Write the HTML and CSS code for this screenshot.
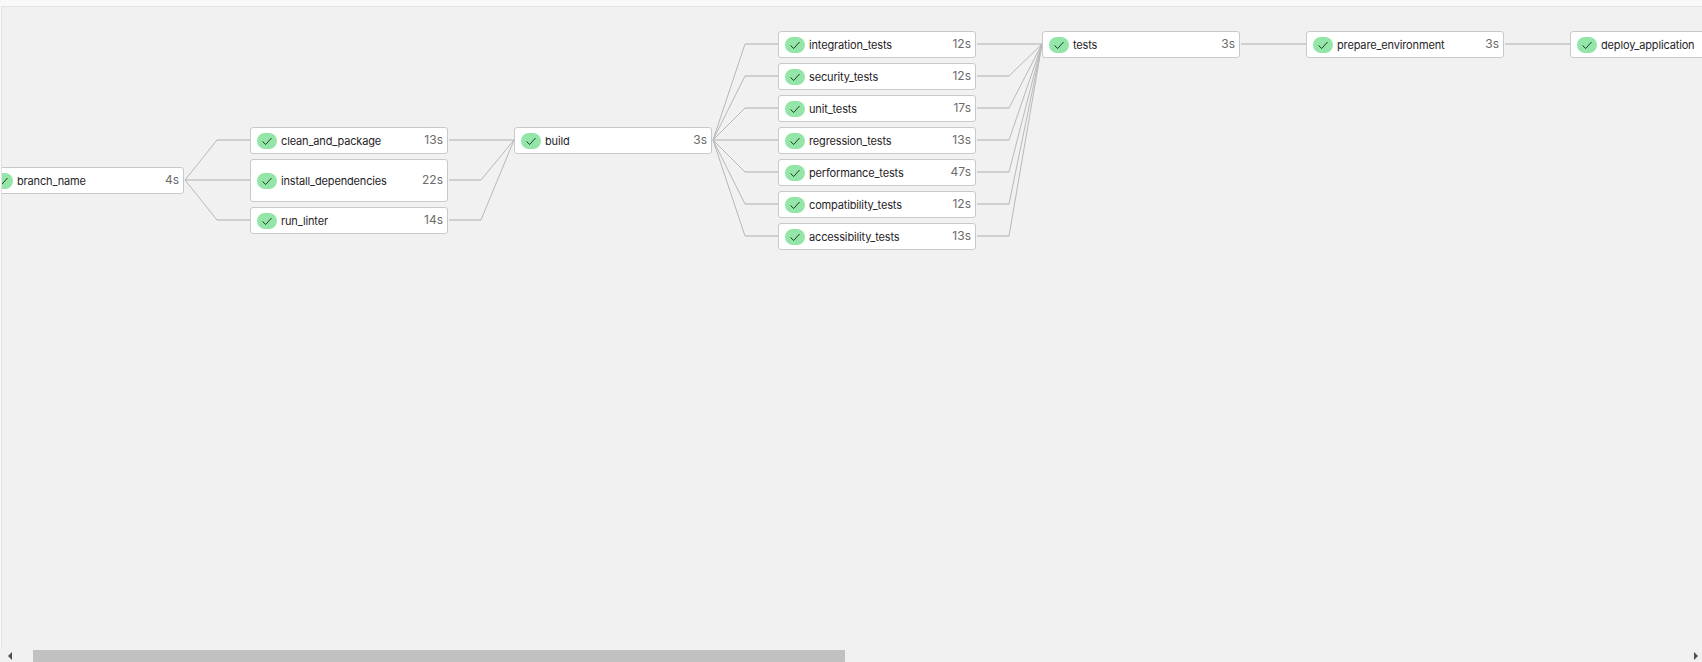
FILE: index.html
```html
<!DOCTYPE html>
<html lang="en">
<head>
<title>Pipeline</title>
<meta charset="utf-8">
<link rel="stylesheet" href="styles.css">
</head>
<body>

<div class="top-strip"></div>

<div class="panel">

  <svg class="edges" width="1702" height="644" viewBox="0 6 1702 644">
    <g class="edge-thick">
      <path d="M185 180H217M217 140H250M185 180H250M217 220H250"/>
      <path d="M449 140H514M449 180H481M449 220H481"/>
      <path d="M713 140H778M745 44H778M745 76H778M745 108H778M745 172H778M745 204H778M745 236H778"/>
      <path d="M977 44H1042M977 76H1009M977 108H1009M977 140H1009M977 172H1009M977 204H1009M977 236H1009"/>
      <path d="M1241 44H1306M1505 44H1570"/>
    </g>
    <g class="edge-thin">
      <path d="M185 180L217 140M185 180L217 220"/>
      <path d="M481 180L514 140M481 220L514 140"/>
      <path d="M713 140L745 44M713 140L745 76M713 140L745 108M713 140L745 172M713 140L745 204M713 140L745 236"/>
      <path d="M1009 76L1042 44M1009 108L1042 44M1009 140L1042 44M1009 172L1042 44M1009 204L1042 44M1009 236L1042 44"/>
    </g>
  </svg>

  <div class="stage">

    <div class="col col-first">
      <div class="node">
        <span class="pill"><svg width="12" height="12" viewBox="0 0 12 12"><path d="M1.5 6.5L4.7 9.5L10.5 3"/></svg></span>
        <span class="name">branch_name</span>
        <span class="time">4s</span>
      </div>
    </div>

    <div class="col col-mid">
      <div class="node">
        <span class="pill"><svg width="12" height="12" viewBox="0 0 12 12"><path d="M1.5 6.5L4.7 9.5L10.5 3"/></svg></span>
        <span class="name">clean_and_package</span>
        <span class="time">13s</span>
      </div>
      <div class="node node-tall">
        <span class="pill"><svg width="12" height="12" viewBox="0 0 12 12"><path d="M1.5 6.5L4.7 9.5L10.5 3"/></svg></span>
        <span class="name">install_dependencies</span>
        <span class="time">22s</span>
      </div>
      <div class="node">
        <span class="pill"><svg width="12" height="12" viewBox="0 0 12 12"><path d="M1.5 6.5L4.7 9.5L10.5 3"/></svg></span>
        <span class="name">run_linter</span>
        <span class="time">14s</span>
      </div>
    </div>

    <div class="col col-mid">
      <div class="node">
        <span class="pill"><svg width="12" height="12" viewBox="0 0 12 12"><path d="M1.5 6.5L4.7 9.5L10.5 3"/></svg></span>
        <span class="name">build</span>
        <span class="time">3s</span>
      </div>
    </div>

    <div class="col">
      <div class="node">
        <span class="pill"><svg width="12" height="12" viewBox="0 0 12 12"><path d="M1.5 6.5L4.7 9.5L10.5 3"/></svg></span>
        <span class="name">integration_tests</span>
        <span class="time">12s</span>
      </div>
      <div class="node">
        <span class="pill"><svg width="12" height="12" viewBox="0 0 12 12"><path d="M1.5 6.5L4.7 9.5L10.5 3"/></svg></span>
        <span class="name">security_tests</span>
        <span class="time">12s</span>
      </div>
      <div class="node">
        <span class="pill"><svg width="12" height="12" viewBox="0 0 12 12"><path d="M1.5 6.5L4.7 9.5L10.5 3"/></svg></span>
        <span class="name">unit_tests</span>
        <span class="time">17s</span>
      </div>
      <div class="node">
        <span class="pill"><svg width="12" height="12" viewBox="0 0 12 12"><path d="M1.5 6.5L4.7 9.5L10.5 3"/></svg></span>
        <span class="name">regression_tests</span>
        <span class="time">13s</span>
      </div>
      <div class="node">
        <span class="pill"><svg width="12" height="12" viewBox="0 0 12 12"><path d="M1.5 6.5L4.7 9.5L10.5 3"/></svg></span>
        <span class="name">performance_tests</span>
        <span class="time">47s</span>
      </div>
      <div class="node">
        <span class="pill"><svg width="12" height="12" viewBox="0 0 12 12"><path d="M1.5 6.5L4.7 9.5L10.5 3"/></svg></span>
        <span class="name">compatibility_tests</span>
        <span class="time">12s</span>
      </div>
      <div class="node">
        <span class="pill"><svg width="12" height="12" viewBox="0 0 12 12"><path d="M1.5 6.5L4.7 9.5L10.5 3"/></svg></span>
        <span class="name">accessibility_tests</span>
        <span class="time">13s</span>
      </div>
    </div>

    <div class="col">
      <div class="node">
        <span class="pill"><svg width="12" height="12" viewBox="0 0 12 12"><path d="M1.5 6.5L4.7 9.5L10.5 3"/></svg></span>
        <span class="name">tests</span>
        <span class="time">3s</span>
      </div>
    </div>

    <div class="col">
      <div class="node">
        <span class="pill"><svg width="12" height="12" viewBox="0 0 12 12"><path d="M1.5 6.5L4.7 9.5L10.5 3"/></svg></span>
        <span class="name">prepare_environment</span>
        <span class="time">3s</span>
      </div>
    </div>

    <div class="col">
      <div class="node">
        <span class="pill"><svg width="12" height="12" viewBox="0 0 12 12"><path d="M1.5 6.5L4.7 9.5L10.5 3"/></svg></span>
        <span class="name">deploy_application</span>
        <span class="time">3s</span>
      </div>
    </div>

  </div>
</div>

<div class="scrollbar">
  <span class="arrow arrow-left"></span>
  <span class="thumb"></span>
  <span class="arrow arrow-right"></span>
</div>

</body>
</html>
```

FILE: styles.css
```css
html, body {
  height: 100%;
}

body {
  margin: 0;
  display: flex;
  flex-direction: column;
  overflow: hidden;
  background-color: #f9f9f9;
  font-family: Inter, "Liberation Sans", sans-serif;
}

.top-strip {
  height: 6px;
  flex: none;
}

.panel {
  position: relative;
  flex: 1;
  min-height: 0;
  margin-left: 1px;
  overflow: hidden;
  background-color: #f1f1f1;
  border-top: 1px solid #e3e3e3;
  border-left: 1px solid #e3e3e3;
}

.edges {
  position: absolute;
  left: -2px;
  top: -1px;
}

.edges path {
  fill: none;
}

.edge-thick path {
  stroke: #cfcfcf;
  stroke-width: 2;
}

.edge-thin path {
  stroke: #b8b8b8;
  stroke-width: 1;
}

.stage {
  position: relative;
  display: flex;
  gap: 66px;
  margin-left: -16px;
  padding-top: 24px;
}

.col {
  display: flex;
  flex-direction: column;
  gap: 5px;
  flex: none;
  width: 198px;
}

.col-first {
  padding-top: 136px;
}

.col-mid {
  padding-top: 96px;
}

.node {
  display: flex;
  align-items: center;
  box-sizing: border-box;
  height: 27px;
  padding: 0 4px 0 6px;
  background-color: #fff;
  border: 1px solid #c9c9c9;
  border-radius: 3px;
  font-size: 11px;
  color: #1f2328;
}

.node-tall {
  height: 43px;
}

.pill {
  display: flex;
  align-items: center;
  justify-content: center;
  flex: none;
  width: 20px;
  height: 16px;
  margin-right: 4px;
  background-color: #94e6a8;
  border-radius: 8px;
}

.pill path {
  fill: none;
  stroke: #1c3a25;
  stroke-width: 1;
}

.name {
  flex: 1;
  letter-spacing: -0.15px;
  white-space: nowrap;
}

.time {
  position: relative;
  top: -1px;
  font-size: 12px;
  color: #6b6b6b;
}

.scrollbar {
  display: flex;
  align-items: center;
  flex: none;
  height: 12px;
  background-color: #f1f1f1;
}

.arrow {
  width: 0;
  height: 0;
  border-top: 4px solid transparent;
  border-bottom: 4px solid transparent;
}

.arrow-left {
  margin-left: 8px;
  border-right: 4px solid #505050;
}

.arrow-right {
  margin-left: 849px;
  border-left: 4px solid #505050;
}

.thumb {
  width: 812px;
  height: 12px;
  margin-left: 21px;
  background-color: #c1c1c1;
}
```
